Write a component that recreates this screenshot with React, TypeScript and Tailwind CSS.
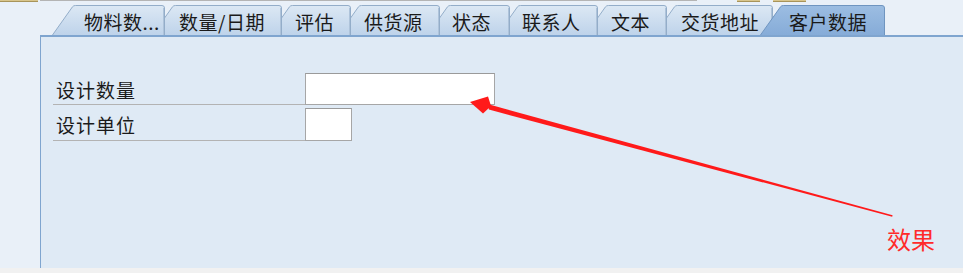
import React from "react";

type Tab = { label: string; w: number; pl: number; active?: boolean };

const tabs: Tab[] = [
  { label: "物料数...", w: 113, pl: 32 },
  { label: "数量/日期", w: 130, pl: 27 },
  { label: "评估", w: 82, pl: 26 },
  { label: "供货源", w: 102, pl: 26 },
  { label: "状态", w: 83, pl: 25 },
  { label: "联系人", w: 101, pl: 25 },
  { label: "文本", w: 82, pl: 26 },
  { label: "交货地址", w: 119, pl: 27 },
  { label: "客户数据", w: 125, pl: 29, active: true },
];

function TabShape({ w, active, id }: { w: number; active?: boolean; id: string }) {
  const d = `M0.5,30 L20.5,1.8 Q21.5,0.5 23.5,0.5 L${w - 3},0.5 Q${w - 0.5},0.5 ${w - 0.5},3 L${w - 0.5},30`;
  return (
    <svg width={w} height={30} className="absolute left-0 top-0" viewBox={`0 0 ${w} 30`}>
      <defs>
        <linearGradient id={id} x1="0" y1="0" x2="0" y2="1">
          {active ? (
            <>
              <stop offset="0" stopColor="#9cbde2" />
              <stop offset="1" stopColor="#86acd8" />
            </>
          ) : (
            <>
              <stop offset="0" stopColor="#dce8f4" />
              <stop offset="1" stopColor="#bed3ea" />
            </>
          )}
        </linearGradient>
      </defs>
      <path d={d + " Z"} fill={`url(#${id})`} stroke="none" />
      <path d={d} fill="none" stroke={active ? "#6f95c0" : "#93adc9"} strokeWidth={1} />
      {!active && <line x1={w - 1.5} y1={3} x2={w - 1.5} y2={30} stroke="#aec3da" strokeWidth={1} />}
    </svg>
  );
}

export default function App() {
  return (
    <div
      className="relative w-[963px] h-[273px] overflow-hidden bg-[#e9f0f8] text-[#1a1a1a]"
      style={{ fontFamily: '"Noto Sans CJK SC", "Noto Sans", sans-serif' }}
    >
      {/* top strip */}
      <div className="flex h-[5px] items-start">
        <div className="h-[2px] w-[38px] bg-[#d8c58c] border-b border-[#a8945a]" />
        <div className="ml-[2px] h-[1px] w-[657px] bg-[#b4b4b4]" />
        <div className="ml-[40px] h-[2px] w-[23px] bg-[#d8c58c] border-b border-[#a8945a]" />
        <div className="ml-[13px] h-[2px] w-[33px] bg-[#d8c58c] border-b border-[#a8945a]" />
      </div>

      {/* tabs */}
      <div className="flex h-[30px] pl-[52px]">
        {tabs.map((t, i) => (
          <div
            key={t.label}
            className="relative h-[30px] shrink-0"
            style={{
              width: t.w,
              marginLeft: i === 0 ? 0 : -13,
              zIndex: t.active ? 30 : 20 - i,
            }}
          >
            <TabShape w={t.w} active={t.active} id={`tg${i}`} />
            <span
              className="relative flex h-[30px] items-center whitespace-nowrap text-[19px] leading-none tracking-[0.5px] pt-[2px]"
              style={{ paddingLeft: t.pl }}
            >
              {t.label}
            </span>
          </div>
        ))}
      </div>

      {/* panel */}
      <div className="relative z-40 ml-[40px] h-[233px] border-l border-t-2 border-[#7fa5cf] bg-[#dfeaf5] pl-[12px] pt-[36px]">
        <div className="flex h-[32px]">
          <div className="flex w-[252px] items-center border-b border-[#b3b3b3] pl-[3px] pt-[2px] text-[19px] tracking-[1px] leading-none">
            设计数量
          </div>
          <div className="h-[32px] w-[190px] border border-[#a6a6a6] border-t-[#9a9a9a] bg-white" />
        </div>
        <div className="mt-[3px] flex h-[33px]">
          <div className="flex w-[252px] items-center border-b border-[#b3b3b3] pl-[3px] text-[19px] tracking-[1px] leading-none">
            设计单位
          </div>
          <div className="h-[33px] w-[47px] border border-[#a6a6a6] border-t-[#9a9a9a] bg-white" />
        </div>
      </div>

      {/* bottom strip */}
      <div className="h-[5px] bg-[#f1f1f1]" />

      {/* annotation arrow */}
      <svg className="absolute left-0 top-0 z-50 pointer-events-none" width={963} height={273}>
        <polygon points="487.5,104 488.9,109.6 892.2,216.7 892.6,215.3" fill="#ff1a1a" />
        <polygon points="470,102 488,96.5 491,106 483,113.5" fill="#ff1a1a" />
      </svg>
      <div className="absolute left-[887px] top-[227px] z-50 text-[24px] leading-none text-[#ff2a2a]">效果</div>
    </div>
  );
}
